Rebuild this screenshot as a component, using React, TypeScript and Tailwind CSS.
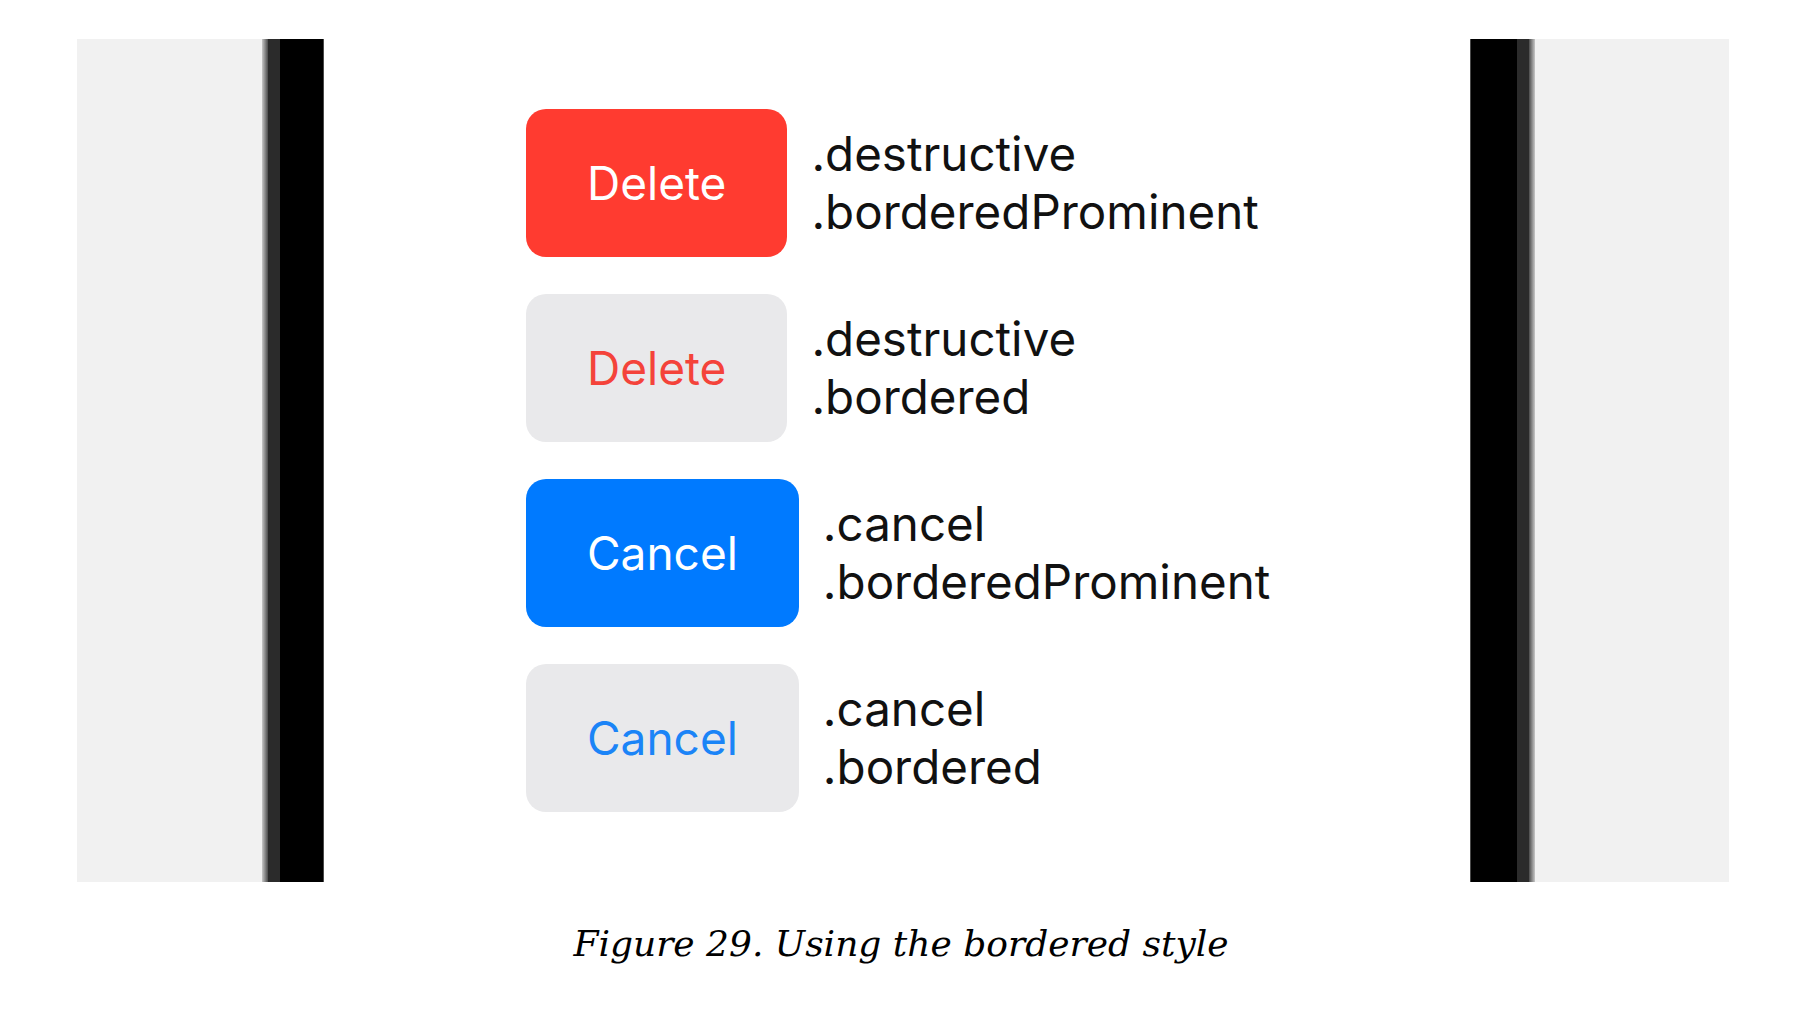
import React from 'react';

// Button roles shown in the figure
const rows = [
  { label: 'Delete', role: '.destructive', style: '.borderedProminent', button: 'bg-[#ff3b30] text-white' },
  { label: 'Delete', role: '.destructive', style: '.bordered', button: 'bg-[#e9e9eb] text-[#f4433a]' },
  { label: 'Cancel', role: '.cancel', style: '.borderedProminent', button: 'bg-[#007aff] text-white' },
  { label: 'Cancel', role: '.cancel', style: '.bordered', button: 'bg-[#e9e9eb] text-[#1b84f7]' },
];

function LeftBezel() {
  return (
    <div className="flex h-full w-[62px] shrink-0">
      <div className="w-[6px] bg-gradient-to-r from-[#c8c8c8] via-[#8a8a8a] to-[#4c4c4c]" />
      <div className="w-[12px] bg-[#2b2b2b]" />
      <div className="w-[43px] bg-black" />
      <div className="w-px bg-[#4a4a4a]" />
    </div>
  );
}

function RightBezel() {
  return (
    <div className="flex h-full w-[65px] shrink-0">
      <div className="w-px bg-[#4a4a4a]" />
      <div className="w-[46px] bg-black" />
      <div className="w-[12px] bg-[#2b2b2b]" />
      <div className="w-[6px] bg-gradient-to-r from-[#4c4c4c] via-[#8a8a8a] to-[#c8c8c8]" />
    </div>
  );
}

export default function App() {
  return (
    <div className="min-h-screen bg-white">
      <div className="pt-[39px] pl-[77px]">
        <div className="flex h-[843px] w-[1652px]">
          <div className="w-[185px] shrink-0 bg-[#f1f1f1]" />
          <LeftBezel />

          {/* Device screen */}
          <div className="flex-1 bg-white pt-[70px] pl-[202px]">
            <div className="flex flex-col gap-[37px]">
              {rows.map((row, idx) => (
                <div key={idx} className="flex items-center">
                  <div
                    className={`flex h-[148px] items-center justify-center rounded-[20px] px-[61px] font-['Inter',sans-serif] text-[46px] leading-none ${row.button}`}
                  >
                    {row.label}
                  </div>
                  <div className="ml-6 font-['Inter',sans-serif] text-[47.5px] leading-[58px] text-[#111]">
                    <div>{row.role}</div>
                    <div>{row.style}</div>
                  </div>
                </div>
              ))}
            </div>
          </div>

          <RightBezel />
          <div className="w-[194px] shrink-0 bg-[#f1f1f1]" />
        </div>
      </div>

      <p className="mt-[40px] text-center font-['DejaVu_Serif',serif] text-[36px] italic leading-[44px] text-black">
        Figure 29. Using the bordered style
      </p>
    </div>
  );
}
